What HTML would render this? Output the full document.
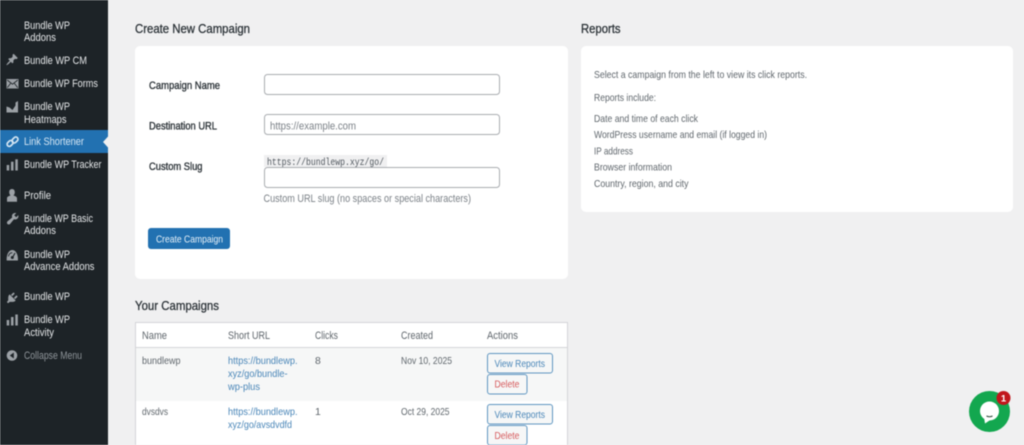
<!DOCTYPE html>
<html lang="en"><head><meta charset="utf-8"><title>Link Shortener</title>
<style>
html,body{margin:0;padding:0;width:1024px;height:445px;overflow:hidden;background:#f0f0f1}
svg{display:block;filter:blur(.45px)}
text{font-family:"Liberation Sans",sans-serif;font-size:10px;white-space:pre}
.m{fill:#e6e8ea;font-size:11px}
.b{fill:#5f666c;font-size:10.400px}
.h{fill:#2c3338;font-size:13.300px;stroke:#2c3338;stroke-width:.3px}
.l{fill:#2c3338;font-size:11px;stroke:#2c3338;stroke-width:.35px}
.a{fill:#4a86b8;font-size:10.400px}
.i{fill:#9ca1a6}
</style></head><body>
<svg width="1024" height="445" viewBox="0 0 1024 445" xmlns="http://www.w3.org/2000/svg">
<rect width="1024" height="445" fill="#f0f0f1"/>
<!-- sidebar -->
<rect width="108" height="445" fill="#1d2327"/>
<rect y="130" width="108" height="23" fill="#2271b1"/>
<path d="M108 136.500L103 142L108 147.500Z" fill="#f0f0f1"/>
<text class="m" x="24" y="29" textLength="46" lengthAdjust="spacingAndGlyphs">Bundle WP</text>
<text class="m" x="24" y="41" textLength="32" lengthAdjust="spacingAndGlyphs">Addons</text>
<text class="m" x="24" y="64" textLength="63" lengthAdjust="spacingAndGlyphs">Bundle WP CM</text>
<text class="m" x="24" y="87" textLength="74" lengthAdjust="spacingAndGlyphs">Bundle WP Forms</text>
<text class="m" x="24" y="110" textLength="46" lengthAdjust="spacingAndGlyphs">Bundle WP</text>
<text class="m" x="24" y="123" textLength="42.500" lengthAdjust="spacingAndGlyphs">Heatmaps</text>
<text class="m" x="24" y="145" textLength="60" lengthAdjust="spacingAndGlyphs" style="fill:#d5e6f3">Link Shortener</text>
<text class="m" x="24" y="168" textLength="77.500" lengthAdjust="spacingAndGlyphs">Bundle WP Tracker</text>
<text class="m" x="24" y="199" textLength="27" lengthAdjust="spacingAndGlyphs">Profile</text>
<text class="m" x="24" y="222" textLength="69" lengthAdjust="spacingAndGlyphs">Bundle WP Basic</text>
<text class="m" x="24" y="234" textLength="32" lengthAdjust="spacingAndGlyphs">Addons</text>
<text class="m" x="24" y="258" textLength="46" lengthAdjust="spacingAndGlyphs">Bundle WP</text>
<text class="m" x="24" y="270" textLength="70.500" lengthAdjust="spacingAndGlyphs">Advance Addons</text>
<text class="m" x="24" y="300" textLength="46" lengthAdjust="spacingAndGlyphs">Bundle WP</text>
<text class="m" x="24" y="323" textLength="46" lengthAdjust="spacingAndGlyphs">Bundle WP</text>
<text class="m" x="24" y="336" textLength="30" lengthAdjust="spacingAndGlyphs">Activity</text>
<text class="m" x="24" y="359" textLength="58" lengthAdjust="spacingAndGlyphs" style="fill:#8f959a">Collapse Menu</text>
<!-- menu icons -->
<g class="i">
<path transform="translate(5.500 53) scale(.66)" d="M10.440 3.020l1.820-1.820 6.360 6.350-1.830 1.820c-1.050-.68-2.480-.57-3.410.36l-.75.75c-.92.93-1.040 2.350-.35 3.410l-1.830 1.820-2.410-2.410-2.800 2.790c-.42.42-3.380 2.710-3.800 2.290s1.860-3.390 2.280-3.810l2.790-2.790L4.100 9.360l1.830-1.820c1.050.69 2.480.57 3.400-.36l.75-.75c.93-.92 1.050-2.350.36-3.410z"/>
<path d="M6.500 79H18.500V88.500H6.500Z"/>
<path d="M7.200 80L12.500 84.200L17.800 80M7.200 87.800L10.700 83.300M17.800 87.800L14.300 83.300" fill="none" stroke="#1d2327" stroke-width=".8"/>
<path d="M6.500 112.500V106.500L9.500 107.500L12.500 110L15.500 105.500V102.500L18 101V112.500Z"/>
<rect x="6.700" y="165" width="2.500" height="5.500"/><rect x="11" y="161.700" width="2.500" height="8.800"/><rect x="15.300" y="159.300" width="2.500" height="11.200"/>
<path d="M12 189C13.800 189 14.800 190.400 14.800 192.300C14.800 193.700 14.200 194.800 13.500 195.500C15.200 196 17 196.800 17 198.300V201.700H7V198.300C7 196.800 8.800 196 10.500 195.500C9.800 194.800 9.200 193.700 9.200 192.300C9.200 190.400 10.200 189 12 189Z"/>
<path transform="translate(5.500 211.500) scale(.72)" d="M16.680 9.770c-1.340 1.340-3.300 1.670-4.950.99l-5.410 6.520c-.99.99-2.590.99-3.580 0s-.99-2.590 0-3.570l6.520-5.420c-.68-1.650-.35-3.610.99-4.950 1.280-1.280 3.120-1.620 4.720-1.060l-2.890 2.890 2.820 2.820 2.860-2.870c.53 1.580.18 3.390-1.080 4.650z"/>
<path d="M6.700 260.500C6.300 255 8.500 250 12.300 250C16.100 250 18.300 255 17.900 260.500Z"/>
<path d="M12.300 258L15 253" stroke="#1d2327" stroke-width="1.100" fill="none"/>
<circle cx="12.300" cy="257.500" r="1.500" fill="#1d2327"/>
<path d="M8.500 256.500a3.800 3.800 0 0 1 3.800-3.800" fill="none" stroke="#1d2327" stroke-width=".8"/>
<path transform="translate(5.500 291) scale(.68)" d="M13.110 4.360L9.870 7.600 8 5.730l3.240-3.240c.35-.34 1.050-.2 1.560.32.520.51.660 1.210.310 1.550zm-8 1.770l.91-1.120 9.010 9.010-1.190.84c-.71.71-2.630 1.160-3.820 1.160H6.140L4.900 17.260c-.59.59-1.540.59-2.120 0-.59-.58-.59-1.530 0-2.120l1.240-1.240v-3.880c0-1.130.4-3.190 1.090-3.890zm7.260 3.970l3.240-3.240c.34-.35 1.040-.21 1.550.31.520.51.660 1.210.31 1.550l-3.240 3.250z"/>
<rect x="6.700" y="320" width="2.500" height="5.500"/><rect x="11" y="317" width="2.500" height="8.500"/><rect x="15.300" y="314.500" width="2.500" height="11"/>
<circle cx="12" cy="355.500" r="5.300"/>
</g>
<path d="M13.800 352.500V358.500L9.800 355.500Z" fill="#1d2327"/>
<g fill="none" stroke="#d5e6f3" stroke-width="1.700">
<rect x="6.800" y="141.200" width="6.600" height="4.400" rx="2.200" transform="rotate(-45 10.100 143.400)"/>
<rect x="11.700" y="137.800" width="6.600" height="4.400" rx="2.200" transform="rotate(-45 15 140)"/>
</g>
<!-- headings -->
<text class="h" x="135" y="33" textLength="115" lengthAdjust="spacingAndGlyphs">Create New Campaign</text>
<text class="h" x="581" y="33" textLength="39.500" lengthAdjust="spacingAndGlyphs">Reports</text>
<text class="h" x="135" y="310" textLength="84" lengthAdjust="spacingAndGlyphs">Your Campaigns</text>
<!-- create card -->
<rect x="135" y="46" width="433" height="233" rx="5" fill="#fff"/>
<text class="l" x="149" y="89" textLength="71" lengthAdjust="spacingAndGlyphs">Campaign Name</text>
<text class="l" x="149" y="129.500" textLength="68" lengthAdjust="spacingAndGlyphs">Destination URL</text>
<text class="l" x="149" y="170" textLength="53.500" lengthAdjust="spacingAndGlyphs">Custom Slug</text>
<g fill="#fff" stroke="#a9acb0" stroke-width="1">
<rect x="264.500" y="74.500" width="235" height="20" rx="3"/>
<rect x="264.500" y="114.500" width="235" height="20" rx="3"/>
<rect x="264.500" y="167.500" width="235" height="20" rx="3"/>
</g>
<text x="270" y="129.500" textLength="86" lengthAdjust="spacingAndGlyphs" style="fill:#7b8187;font-size:11px">https://example.com</text>
<rect x="264" y="155" width="123" height="12" fill="#f0f0f1"/>
<text x="267" y="165" textLength="117" lengthAdjust="spacingAndGlyphs" style="font-family:'Liberation Mono',monospace;font-size:10px;fill:#50575e">https://bundlewp.xyz/go/</text>
<text x="263.500" y="202" textLength="207.500" lengthAdjust="spacingAndGlyphs" style="fill:#7b8187;font-size:11px">Custom URL slug (no spaces or special characters)</text>
<rect x="148" y="228" width="82" height="21" rx="3" fill="#2271b1"/>
<text x="156" y="242.500" textLength="67" lengthAdjust="spacingAndGlyphs" style="fill:#e8f1f8;font-size:10.400px">Create Campaign</text>
<!-- reports card -->
<rect x="581" y="46" width="432" height="166" rx="5" fill="#fff"/>
<text class="b" x="594" y="78" textLength="213" lengthAdjust="spacingAndGlyphs">Select a campaign from the left to view its click reports.</text>
<text class="b" x="594" y="101" textLength="62" lengthAdjust="spacingAndGlyphs">Reports include:</text>
<text class="b" x="594" y="122" textLength="104" lengthAdjust="spacingAndGlyphs">Date and time of each click</text>
<text class="b" x="594" y="138" textLength="173" lengthAdjust="spacingAndGlyphs">WordPress username and email (if logged in)</text>
<text class="b" x="594" y="154.500" textLength="39" lengthAdjust="spacingAndGlyphs">IP address</text>
<text class="b" x="594" y="170.500" textLength="78" lengthAdjust="spacingAndGlyphs">Browser information</text>
<text class="b" x="594" y="187" textLength="94.500" lengthAdjust="spacingAndGlyphs">Country, region, and city</text>
<!-- table -->
<rect x="135.500" y="322.500" width="432" height="130" fill="#fff" stroke="#d4d5d8"/>
<rect x="136" y="348" width="431" height="53" fill="#f6f7f7"/>
<rect x="136" y="347" width="431" height="1" fill="#d4d5d8"/>
<text class="b" x="142" y="339" textLength="25" lengthAdjust="spacingAndGlyphs" style="font-size:11px">Name</text>
<text class="b" x="228" y="339" textLength="42" lengthAdjust="spacingAndGlyphs" style="font-size:11px">Short URL</text>
<text class="b" x="315" y="339" textLength="23" lengthAdjust="spacingAndGlyphs" style="font-size:11px">Clicks</text>
<text class="b" x="401" y="339" textLength="32" lengthAdjust="spacingAndGlyphs" style="font-size:11px">Created</text>
<text class="b" x="487" y="339" textLength="31" lengthAdjust="spacingAndGlyphs" style="font-size:11px">Actions</text>
<text class="b" x="142" y="364" textLength="38.500" lengthAdjust="spacingAndGlyphs">bundlewp</text>
<text class="a" x="228" y="364" textLength="69.500" lengthAdjust="spacingAndGlyphs">https://bundlewp.</text>
<text class="a" x="228" y="377" textLength="59.500" lengthAdjust="spacingAndGlyphs">xyz/go/bundle-</text>
<text class="a" x="228" y="390" textLength="32" lengthAdjust="spacingAndGlyphs">wp-plus</text>
<text class="b" x="315" y="364">8</text>
<text class="b" x="401" y="364" textLength="51" lengthAdjust="spacingAndGlyphs">Nov 10, 2025</text>
<text class="b" x="142" y="415" textLength="26" lengthAdjust="spacingAndGlyphs">dvsdvs</text>
<text class="a" x="228" y="415" textLength="69.500" lengthAdjust="spacingAndGlyphs">https://bundlewp.</text>
<text class="a" x="228" y="428" textLength="64" lengthAdjust="spacingAndGlyphs">xyz/go/avsdvdfd</text>
<text class="b" x="315" y="415">1</text>
<text class="b" x="401" y="415" textLength="48.500" lengthAdjust="spacingAndGlyphs">Oct 29, 2025</text>
<g fill="#f6f7f7" stroke="#5f96c1">
<rect x="487.500" y="353.500" width="65" height="19.500" rx="2.500"/>
<rect x="487.500" y="374.500" width="39.500" height="19.500" rx="2.500"/>
<rect x="487.500" y="404.500" width="65" height="19.500" rx="2.500"/>
<rect x="487.500" y="425.500" width="39.500" height="19.500" rx="2.500"/>
</g>
<text class="a" x="494.500" y="367" textLength="50.500" lengthAdjust="spacingAndGlyphs">View Reports</text>
<text class="a" x="494.500" y="387.500" textLength="25" lengthAdjust="spacingAndGlyphs" style="fill:#d65a5c">Delete</text>
<text class="a" x="494.500" y="418" textLength="50.500" lengthAdjust="spacingAndGlyphs">View Reports</text>
<text class="a" x="494.500" y="439" textLength="25" lengthAdjust="spacingAndGlyphs" style="fill:#d65a5c">Delete</text>
<!-- chat -->
<circle cx="989.500" cy="411.500" r="20.500" fill="#13a74f"/>
<circle cx="989.500" cy="411" r="9.500" fill="#fff"/>
<path d="M984 417L985 423.500L991 419.500Z" fill="#fff"/>
<path d="M986.500 416Q989.500 417.500 992.500 416" fill="none" stroke="#2d4a3a" stroke-width="1.100"/>
<circle cx="1003.500" cy="398" r="7" fill="#c1161c"/>
<text x="1003.500" y="401.500" text-anchor="middle" style="fill:#fff;font-size:9.500px;font-weight:bold">1</text>
</svg>
</body></html>
